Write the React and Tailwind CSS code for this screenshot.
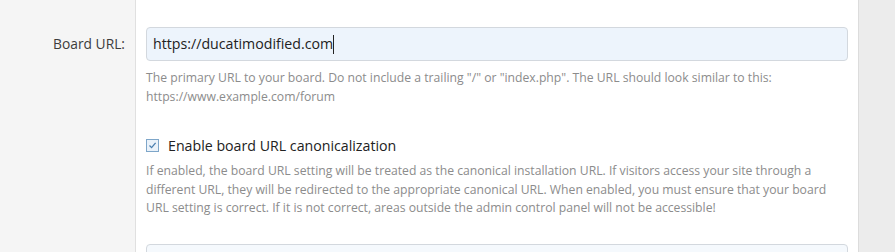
import React from "react";

export default function App() {
  const font = { fontFamily: '"Open Sans", "Noto Sans", sans-serif' };
  return (
    <div className="flex w-[895px] h-[252px] overflow-hidden bg-white" style={font}>
      <div className="flex flex-col w-[858px]">
        <div className="flex">
          <div className="w-[136px] shrink-0 bg-[#f5f5f5] border-r border-[#e0e0e0] pt-[34px] pr-[10px] text-right text-[13.8px] text-[#3c3c3c]">
            Board URL:
          </div>
          <div className="flex-1 pl-[10px] pr-[10px] pt-[27px]">
            <div className="h-[34px] rounded-[4px] border border-[#d3d8de] bg-[#edf4fc] flex items-center pl-[6px] text-[14.2px] text-[#222]">
              https://ducatimodified.com<span className="inline-block w-px h-[19px] bg-[#222]"></span>
            </div>
            <div className="mt-[7px] text-[12.2px] leading-[19px] text-[#8c8c8c] pr-[20px]">
              The primary URL to your board. Do not include a trailing "/" or "index.php". The URL should look similar to this: https://www.example.com/forum
            </div>
            <div className="mt-[29px] flex items-center gap-[9px]">
              <div className="w-[13px] h-[13px] border border-[#7ea6c9] bg-[#eaf2fa] flex items-center justify-center">
                <svg width="9" height="9" viewBox="0 0 9 9"><path d="M1.5 4.5 L3.6 6.6 L7.6 1.8" fill="none" stroke="#4a7fb0" strokeWidth="1.3" /></svg>
              </div>
              <span className="text-[14.2px] text-[#222]">Enable board URL canonicalization</span>
            </div>
            <div className="mt-[6px] text-[12.2px] leading-[18.5px] text-[#8c8c8c] pr-[20px]">
              If enabled, the board URL setting will be treated as the canonical installation URL. If visitors access your site through a different URL, they will be redirected to the appropriate canonical URL. When enabled, you must ensure that your board URL setting is correct. If it is not correct, areas outside the admin control panel will not be accessible!
            </div>
            <div className="mt-[26px] h-[34px] rounded-[4px] border border-[#d3d8de] bg-[#f5f9fd]"></div>
          </div>
        </div>
      </div>
      <div className="flex-1 bg-[#ececec] border-l border-[#dcdcdc]"></div>
    </div>
  );
}
